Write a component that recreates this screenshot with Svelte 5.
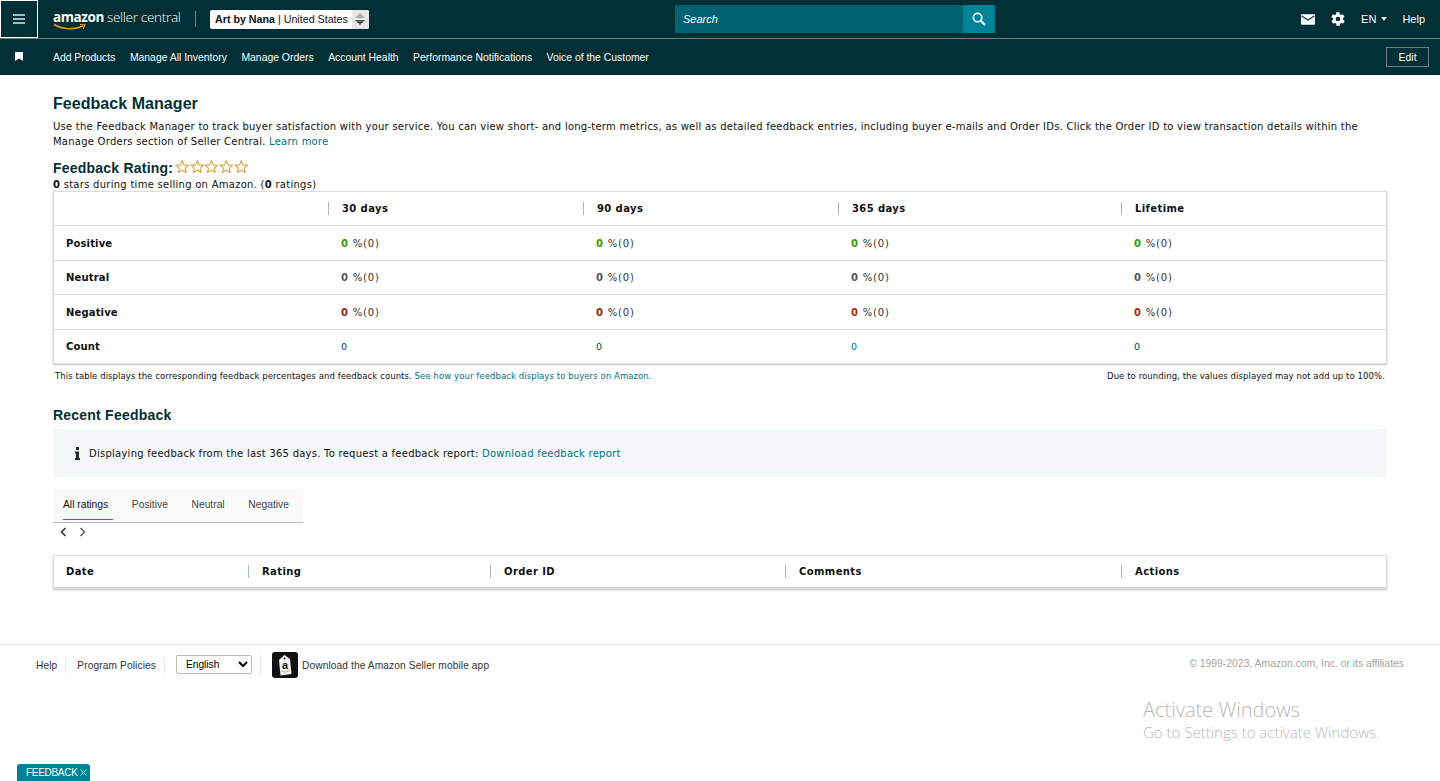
<script>
  const navLinks = [
    "Add Products",
    "Manage All Inventory",
    "Manage Orders",
    "Account Health",
    "Performance Notifications",
    "Voice of the Customer",
  ];

  const periods = ["30 days", "90 days", "365 days", "Lifetime"];

  const rows = [
    { label: "Positive", colors: ["green", "green", "green", "green"] },
    { label: "Neutral", colors: ["grey", "grey", "grey", "grey"] },
    { label: "Negative", colors: ["darkred", "darkred", "red", "red"] },
  ];

  const tabs = ["All ratings", "Positive", "Neutral", "Negative"];

  const recentCols = ["Date", "Rating", "Order ID", "Comments", "Actions"];
</script>

<header class="topbar">
  <button class="menu" aria-label="Menu">
    <svg width="14" height="12" viewBox="0 0 14 12"><path d="M1 2h12M1 6h12M1 10h12" stroke="#dfe6e7" stroke-width="1.400" /></svg>
  </button>
  <div class="logo">
    <span class="logo-amazon">amazon</span><span class="logo-seller">seller central</span>
    <svg class="smile" width="36" height="8" viewBox="0 0 36 8">
      <path d="M1 1.500C9 6.500 21 7 30 3" fill="none" stroke="#e8952f" stroke-width="1.500" />
      <path d="M27 1.500l5 .3-1.800 4" fill="none" stroke="#e8952f" stroke-width="1.200" />
    </svg>
  </div>
  <span class="logo-sep"></span>
  <div class="account">
    <span class="account-name"><b>Art by Nana</b> | United States</span>
    <span class="spinner">
      <svg width="12" height="14" viewBox="0 0 12 14">
        <path d="M6 1l5 5H1z" fill="#a9a9a9" />
        <path d="M1 8h10l-5 5z" fill="#555" />
      </svg>
    </span>
  </div>
  <div class="search">
    <span class="search-text">Search</span>
    <span class="search-btn">
      <svg width="14" height="14" viewBox="0 0 14 14"><circle cx="5.600" cy="5.600" r="4.200" fill="none" stroke="#fff" stroke-width="1.600" /><path d="M8.800 8.800L13 13" stroke="#fff" stroke-width="2" /></svg>
    </span>
  </div>
  <div class="top-right">
    <svg width="14" height="11" viewBox="0 0 15 11"><rect width="15" height="11" rx="1" fill="#fff" /><path d="M0.800 1.800L7.500 6l6.700-4.200" fill="none" stroke="#002f36" stroke-width="1.200" /></svg>
    <svg class="gear" width="16" height="16" viewBox="0 0 24 24"><path fill="#fff" d="M19.400 13c.1-.3.1-.7.1-1s0-.7-.1-1l2.100-1.600c.2-.2.2-.4.1-.6l-2-3.500c-.1-.2-.4-.3-.6-.2l-2.500 1c-.5-.4-1.100-.7-1.700-1l-.4-2.600c0-.3-.2-.5-.5-.5h-4c-.3 0-.5.2-.5.400l-.4 2.700c-.6.2-1.200.6-1.700 1l-2.500-1c-.2-.1-.5 0-.6.2l-2 3.500c-.1.2-.1.4.1.6L4.600 11c-.1.3-.1.700-.1 1s0 .7.1 1l-2.100 1.600c-.2.2-.2.4-.1.6l2 3.500c.1.200.4.300.6.200l2.500-1c.5.400 1.100.700 1.700 1l.4 2.600c0 .3.2.5.5.5h4c.3 0 .5-.2.5-.4l.4-2.700c.6-.2 1.200-.6 1.700-1l2.500 1c.2.100.5 0 .6-.2l2-3.500c.1-.2.1-.4-.1-.6zM12 15.500a3.500 3.500 0 1 1 0-7 3.500 3.500 0 0 1 0 7z" /></svg>
    <span class="lang">EN<i class="caret"></i></span>
    <span class="help">Help</span>
  </div>
</header>

<nav class="subbar">
  <svg class="bookmark" width="8" height="9" viewBox="0 0 8 9"><path d="M0 0h8v9L4 6.500 0 9z" fill="#fff" /></svg>
  <div class="nav-links">
    {#each navLinks as link}
      <a href="#top">{link}</a>
    {/each}
  </div>
  <button class="edit">Edit</button>
</nav>

<main>
  <h1>Feedback Manager</h1>
  <p class="intro">
    Use the Feedback Manager to track buyer satisfaction with your service. You can view short- and long-term metrics, as well as detailed feedback entries, including buyer e-mails and Order IDs. Click the Order ID to view transaction details within the Manage Orders section of Seller Central. <a href="#top">Learn more</a>
  </p>

  <div class="rating-head">
    <h2>Feedback Rating:</h2>
    <span class="stars">
      {#each [1, 2, 3, 4, 5] as s (s)}
        <svg width="14.600" height="13" viewBox="0 0 24 23"><path d="M12 1.500l3.200 7.100 7.700.8-5.800 5.100 1.700 7.600-6.800-4-6.800 4 1.700-7.600L1.100 9.400l7.700-.8z" fill="#fff" stroke="#d9a645" stroke-width="2" /></svg>
      {/each}
    </span>
  </div>
  <p class="stars-note"><b>0</b> stars during time selling on Amazon. (<b>0</b> ratings)</p>

  <div class="card">
    <div class="metrics-row head">
      <div></div>
      {#each periods as p}
        <div class="th"><span>{p}</span></div>
      {/each}
    </div>
    {#each rows as row}
      <div class="metrics-row">
        <div class="label">{row.label}</div>
        {#each row.colors as c}
          <div class="cell"><b class={c}>0</b> %(0)</div>
        {/each}
      </div>
    {/each}
    <div class="metrics-row">
      <div class="label">Count</div>
      <div class="cell count">0</div>
      <div class="cell count">0</div>
      <div class="cell count link">0</div>
      <div class="cell count">0</div>
    </div>
  </div>

  <div class="table-note">
    <span>This table displays the corresponding feedback percentages and feedback counts. <a href="#top">See how your feedback displays to buyers on Amazon.</a></span>
    <span>Due to rounding, the values displayed may not add up to 100%.</span>
  </div>

  <h2 class="recent">Recent Feedback</h2>

  <div class="info">
    <svg width="5" height="13" viewBox="0 0 5 13"><path d="M1 0h3v3H1zM0 4.500h4V11h1v2H0v-2h1V6.500H0z" fill="#1f2b33" /></svg>
    <span>Displaying feedback from the last 365 days. To request a feedback report: <a href="#top">Download feedback report</a></span>
  </div>

  <div class="tabs">
    {#each tabs as tab, i}
      <span class="tab" class:active={i === 0}>{tab}</span>
    {/each}
  </div>
  <div class="pager">
    <svg width="7" height="10" viewBox="0 0 7 10"><path d="M5.500 1L1.500 5l4 4" fill="none" stroke="#333" stroke-width="1.600" /></svg>
    <svg width="7" height="10" viewBox="0 0 7 10"><path d="M1.500 1l4 4-4 4" fill="none" stroke="#555" stroke-width="1.400" /></svg>
  </div>

  <div class="card recent-card">
    {#each recentCols as col, i}
      <div class="th" class:first={i === 0}><span>{col}</span></div>
    {/each}
  </div>
</main>

<footer>
  <a href="#top" class="foot-link">Help</a>
  <a href="#top" class="foot-link">Program Policies</a>
  <div class="foot-lang">
    <select>
      <option>English</option>
    </select>
  </div>
  <div class="app-icon">
    <svg width="26" height="26" viewBox="0 0 26 26">
      <rect width="26" height="26" rx="3" fill="#111" />
      <path d="M7 8l5.500-5 5.500 4 1.500 15-11 1.500z" fill="#f4f4f4" />
      <circle cx="12.500" cy="6.500" r="1" fill="#111" />
      <path d="M9.500 19c2.500 1.500 5.500 1.200 8-.5" fill="none" stroke="#e8952f" stroke-width="1" />
      <text x="13" y="16.500" text-anchor="middle" class="app-a">a</text>
    </svg>
  </div>
  <span class="app-text">Download the Amazon Seller mobile app</span>
  <span class="copyright">© 1999-2023, Amazon.com, Inc. or its affiliates</span>
</footer>

<div class="activate">
  <div class="activate-title">Activate Windows</div>
  <div class="activate-sub">Go to Settings to activate Windows.</div>
</div>

<div class="feedback-tab">
  FEEDBACK
  <svg width="7" height="7" viewBox="0 0 7 7"><path d="M.5.500l6 6M6.500.500l-6 6" stroke="#fff" stroke-width=".8" /></svg>
</div>

<style>
  :global(body) {
    margin: 0;
    background: #fff;
    font-family: "Liberation Sans", Arial, sans-serif;
    color: #0f1111;
  }

  .topbar {
    display: flex;
    align-items: center;
    height: 38px;
    background: #002f36;
    border-bottom: 1px solid #6b7f83;
    color: #fff;
  }
  .menu {
    width: 38px;
    height: 38px;
    flex: none;
    padding: 0;
    background: transparent;
    border: 1px solid #fff;
    display: flex;
    align-items: center;
    justify-content: center;
  }
  .logo {
    position: relative;
    margin-left: 15px;
    width: 128px;
    height: 28px;
    flex: none;
    white-space: nowrap;
    line-height: 28px;
    margin-top: -4px;
  }
  .logo-amazon {
    font-family: "Open Sans", sans-serif;
    font-weight: 700;
    font-size: 13.500px;
    letter-spacing: -0.400px;
  }
  .logo-seller {
    font-family: "Open Sans", sans-serif;
    font-weight: 300;
    font-size: 13.500px;
    margin-left: 3px;
    letter-spacing: -0.300px;
  }
  .smile {
    position: absolute;
    left: 0;
    top: 20px;
  }
  .logo-sep {
    width: 1px;
    height: 16px;
    background: #6b7f83;
    margin-left: 14px;
    flex: none;
  }
  .account {
    display: flex;
    align-items: center;
    height: 19px;
    margin-left: 14px;
    background: #fff;
    border-radius: 2px;
    color: #111;
    font-size: 10.700px;
    flex: none;
  }
  .account-name {
    padding: 0 4px 0 5px;
  }
  .spinner {
    width: 17px;
    height: 19px;
    background: #e7e7e7;
    display: flex;
    align-items: center;
    justify-content: center;
    border-radius: 0 2px 2px 0;
  }
  .search {
    position: absolute;
    left: 675px;
    top: 5px;
    width: 320px;
    height: 28px;
    display: flex;
    background: #006170;
  }
  .search-text {
    flex: 1;
    padding-left: 8px;
    line-height: 28px;
    font-size: 11px;
    font-style: italic;
  }
  .search-btn {
    width: 32px;
    background: #008296;
    display: flex;
    align-items: center;
    justify-content: center;
  }
  .top-right {
    margin-left: auto;
    display: flex;
    align-items: center;
    font-size: 11px;
    padding-right: 15px;
  }
  .gear {
    margin-left: 15px;
  }
  .lang {
    margin-left: 15px;
    display: flex;
    align-items: center;
  }
  .caret {
    margin-left: 5px;
    border: 3.500px solid transparent;
    border-top: 4px solid #ddd;
    border-bottom: 0;
  }
  .help {
    margin-left: 15px;
  }

  .subbar {
    display: flex;
    align-items: center;
    height: 36px;
    background: #002f36;
    color: #fff;
    padding-left: 15px;
    padding-right: 11px;
  }
  .bookmark {
    margin-top: -2px;
    flex: none;
  }
  .nav-links {
    display: flex;
    gap: 14.500px;
    margin-left: 30px;
    font-size: 10.400px;
  }
  .nav-links a {
    color: #fff;
    text-decoration: none;
  }
  .edit {
    margin-left: auto;
    width: 43px;
    height: 20px;
    padding: 0;
    background: transparent;
    border: 1px solid #6b7f83;
    color: #fff;
    font-family: inherit;
    font-size: 10.500px;
  }

  main {
    padding: 20px 53px 0;
    font-family: "DejaVu Sans", Verdana, sans-serif;
    font-size: 10px;
    letter-spacing: 0.270px;
    color: #0f1111;
  }
  h1,
  h2 {
    margin: 0;
    font-family: "Liberation Sans", Arial, sans-serif;
    font-weight: 700;
    color: #002f36;
  }
  h1 {
    font-size: 16px;
    line-height: 18px;
    letter-spacing: 0.050px;
  }
  h2 {
    font-size: 14px;
    line-height: 16px;
    letter-spacing: 0.220px;
  }
  a {
    color: #007185;
    text-decoration: none;
  }
  .intro {
    margin: 6px 0 0;
    line-height: 15px;
    letter-spacing: 0.245px;
  }
  .rating-head {
    display: flex;
    align-items: center;
    margin-top: 11px;
    height: 16px;
  }
  .stars {
    display: flex;
    margin-left: 2px;
    margin-top: -4px;
  }
  .stars-note {
    margin: 2px 0 0;
    line-height: 13px;
    height: 13px;
  }
  .card {
    border: 1px solid #dcdede;
    box-shadow: 0 1px 2px rgba(0, 0, 0, 0.25);
    background: #fff;
  }
  .metrics-row {
    display: grid;
    grid-template-columns: 274px 255px 255px 283px 1fr;
    align-items: center;
    height: 34.500px;
    padding-top: 1px;
    border-top: 1px solid #d9dbdb;
    box-sizing: border-box;
  }
  .metrics-row.head {
    border-top: 0;
    padding-top: 0;
    height: 33px;
  }
  .th {
    font-weight: 700;
    letter-spacing: 0.400px;
    color: #0f1111;
    border-left: 1px solid #aab7b8;
    height: 13px;
    line-height: 13px;
    padding-left: 13px;
  }
  .label {
    font-weight: 700;
    padding-left: 12px;
    letter-spacing: 0.150px;
  }
  .cell {
    padding-left: 13px;
    color: #333;
    letter-spacing: 0.800px;
  }
  .count {
    font-size: 9.500px;
    color: #00464f;
  }
  .count.link {
    color: #007185;
  }
  .green {
    color: #2f9d05;
  }
  .grey {
    color: #555;
  }
  .darkred {
    color: #8f1d0a;
  }
  .red {
    color: #b12704;
  }
  .table-note {
    display: flex;
    justify-content: space-between;
    padding: 6px 2px 0;
    font-size: 8.500px;
    letter-spacing: 0.080px;
    line-height: 12px;
  }
  .recent {
    margin-top: 25px;
  }
  .info {
    display: flex;
    align-items: center;
    gap: 9px;
    height: 48px;
    margin-top: 6px;
    padding-left: 22px;
    background: #f4f8f8;
    letter-spacing: 0.250px;
  }
  .tabs {
    display: flex;
    align-items: flex-start;
    height: 33px;
    margin-top: 12px;
    background: #fafafa;
    border-bottom: 1px solid #b9b9b9;
    font-family: "Liberation Sans", Arial, sans-serif;
    font-size: 10.300px;
    letter-spacing: 0;
    color: #444;
    padding-left: 10px;
    width: 240px;
    gap: 23.600px;
  }
  .tab {
    height: 31px;
    line-height: 31px;
    box-sizing: border-box;
  }
  .tab.active {
    color: #111;
    border-bottom: 1px solid #008296;
    padding-right: 5px;
    margin-right: -5px;
  }
  .pager {
    display: flex;
    gap: 12px;
    padding: 4px 0 0 7px;
    height: 12px;
  }
  .recent-card {
    display: grid;
    grid-template-columns: 194px 242px 295px 336px 1fr;
    align-items: center;
    height: 34px;
    margin-top: 16px;
    border-bottom: 2px solid #d5d9d9;
    box-sizing: border-box;
  }
  .recent-card .first {
    border-left: 0;
    padding-left: 12px;
  }

  footer {
    display: flex;
    align-items: center;
    margin-top: 55px;
    height: 40px;
    padding-left: 36px;
    border-top: 1px solid #e7e7e7;
    font-size: 10.200px;
    font-family: "Liberation Sans", Arial, sans-serif;
    color: #333;
    position: relative;
  }
  .foot-link {
    color: #333;
    height: 15px;
    line-height: 15px;
    padding-right: 8px;
    margin-right: 11px;
    border-right: 1px solid #e7e7e7;
    letter-spacing: 0.100px;
  }
  .foot-lang {
    height: 21px;
    padding-right: 8px;
    border-right: 1px solid #e7e7e7;
    margin-right: 11px;
  }
  select {
    width: 76px;
    height: 19px;
    font-family: inherit;
    font-size: 10.200px;
    background: #fff;
    border: 1px solid #bbb;
    border-radius: 2px;
    padding-left: 5px;
  }
  .app-icon {
    width: 26px;
    height: 26px;
  }
  .app-a {
    font: 700 11px "Liberation Sans", sans-serif;
    fill: #111;
  }
  .app-text {
    margin-left: 4px;
    letter-spacing: 0.100px;
  }
  .copyright {
    margin-left: auto;
    margin-right: 36px;
    margin-top: -4px;
    color: #a4a4a4;
    font-size: 10.400px;
  }

  .activate {
    position: absolute;
    left: 1143px;
    top: 697px;
    font-family: "Open Sans", sans-serif;
    color: #b8b8b8;
    font-weight: 300;
  }
  .activate-title {
    font-size: 20px;
    line-height: 26px;
  }
  .activate-sub {
    font-size: 15px;
    line-height: 19px;
  }
  .feedback-tab {
    position: fixed;
    left: 17px;
    bottom: 0;
    width: 73px;
    height: 17px;
    box-sizing: border-box;
    padding-left: 9px;
    background: #008296;
    border-radius: 3px 3px 0 0;
    color: #fff;
    font-size: 10px;
    letter-spacing: -0.300px;
    line-height: 18px;
    white-space: nowrap;
  }
</style>
